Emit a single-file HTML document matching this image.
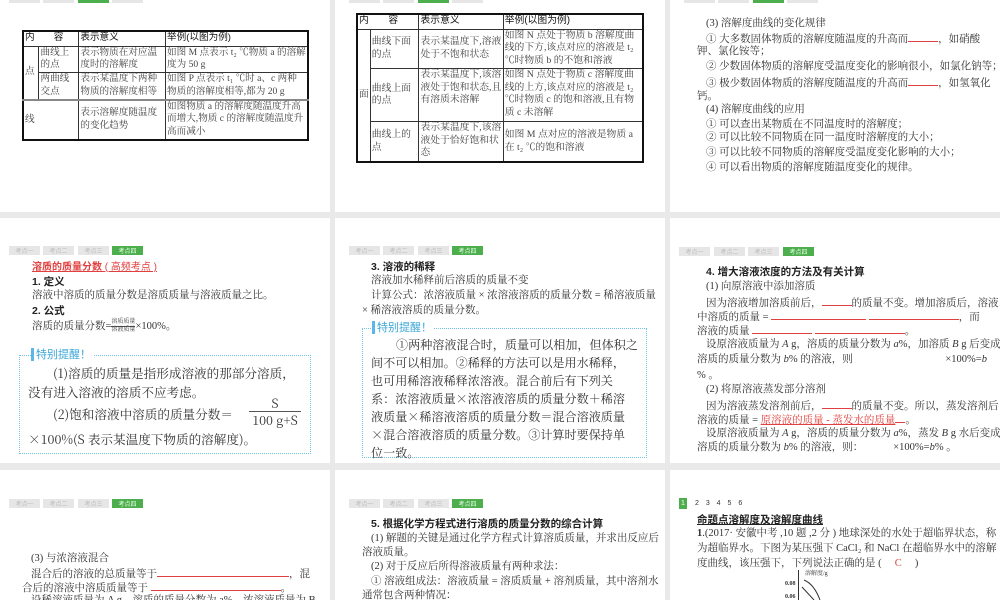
<!DOCTYPE html>
<html><head><meta charset="utf-8"><style>
*{margin:0;padding:0;box-sizing:border-box}
body{width:1000px;height:600px;background:#e9e9e9;position:relative;overflow:hidden;font-family:"Liberation Serif","Noto Serif CJK SC","Noto Sans CJK SC",serif;color:#333}
.p{position:absolute;background:#fff;overflow:hidden}
.a{position:absolute;white-space:nowrap}
.t{font-size:10.5px;line-height:14px}
.b{font-weight:bold;font-family:"Liberation Sans","Noto Sans CJK SC",sans-serif;color:#222}
.tab{position:absolute;width:31px;height:9px;background:#e6e6e6;color:#bbb;font-size:6px;line-height:9px;text-align:center;font-family:"Noto Sans CJK SC",sans-serif}
.tab.g{background:#4cae4c;color:#e8ffe8}
table{position:absolute;border-collapse:collapse;border:2px solid #111;font-size:9.6px;line-height:12.5px;color:#444}
td{border:1px solid #333;vertical-align:top;padding:0 1px}
.hd td{font-family:"Liberation Sans","Noto Sans CJK SC",sans-serif;color:#111}
.red{color:#e0403f}
.ul{border-bottom:1px solid #e0403f;display:inline-block;height:11px;vertical-align:baseline}
.tip{position:absolute;border:1px dotted #6fc3e6}
.tipl{position:absolute;font-family:"Noto Sans CJK SC",sans-serif;font-size:11px;color:#3aa6d8;background:#fff;border-left:3px solid #59b8e6;padding:0 2px;line-height:13px}
.tt{font-size:12.6px;line-height:19px;color:#333;letter-spacing:0;font-family:"Noto Serif CJK SC",serif}
.t5 .tt{font-size:12.1px;line-height:18px}
</style></head><body>

<!-- Panel 1 -->
<div class="p" style="left:0;top:0;width:330px;height:212px">
<div class="tab" style="left:9px;top:-6px"></div><div class="tab" style="left:43px;top:-6px"></div><div class="tab g" style="left:78px;top:-6px"></div><div class="tab" style="left:112px;top:-6px"></div>
<table style="left:22px;top:30px;width:287px;height:111px">
<tr class="hd" style="height:15px"><td colspan="2">内　　容</td><td style="width:87px">表示意义</td><td style="width:143px">举例(以图为例)</td></tr>
<tr><td rowspan="2" style="width:16px;vertical-align:middle">点</td><td style="width:40px">曲线上的点</td><td>表示物质在对应温度时的溶解度</td><td>如图 M 点表示 t₂ ℃物质 a 的溶解度为 50 g</td></tr>
<tr><td>两曲线交点</td><td>表示某温度下两种物质的溶解度相等</td><td>如图 P 点表示 t₁ ℃时 a、c 两种物质的溶解度相等,都为 20 g</td></tr>
<tr style="border-top:2px solid #888"><td colspan="2" style="vertical-align:middle">线</td><td style="vertical-align:middle">表示溶解度随温度的变化趋势</td><td>如图物质 a 的溶解度随温度升高而增大,物质 c 的溶解度随温度升高而减小</td></tr>
</table>
</div>

<!-- Panel 2 -->
<div class="p" style="left:335px;top:0;width:330px;height:212px">
<div class="tab" style="left:14px;top:-6px"></div><div class="tab" style="left:48px;top:-6px"></div><div class="tab g" style="left:83px;top:-6px"></div><div class="tab" style="left:117px;top:-6px"></div>
<table style="left:21px;top:13px;width:288px;height:150px;font-size:9.8px">
<tr class="hd" style="height:15px"><td colspan="2">内　　容</td><td style="width:85px">表示意义</td><td style="width:141px">举例(以图为例)</td></tr>
<tr><td rowspan="3" style="width:12px;vertical-align:middle">面</td><td style="width:49px;vertical-align:middle">曲线下面的点</td><td style="vertical-align:middle">表示某温度下,溶液处于不饱和状态</td><td>如图 N 点处于物质 b 溶解度曲线的下方,该点对应的溶液是 t₂ ℃时物质 b 的不饱和溶液</td></tr>
<tr><td style="vertical-align:middle">曲线上面的点</td><td>表示某温度下,该溶液处于饱和状态,且有溶质未溶解</td><td>如图 N 点处于物质 c 溶解度曲线的上方,该点对应的溶液是 t₂ ℃时物质 c 的饱和溶液,且有物质 c 未溶解</td></tr>
<tr><td style="vertical-align:middle">曲线上的点</td><td>表示某温度下,该溶液处于恰好饱和状态</td><td style="vertical-align:middle">如图 M 点对应的溶液是物质 a 在 t₂ ℃的饱和溶液</td></tr>
</table>
</div>

<!-- Panel 3 -->
<div class="p t" style="left:670px;top:0;width:330px;height:212px">
<div class="tab" style="left:14px;top:-6px"></div><div class="tab" style="left:48px;top:-6px"></div><div class="tab g" style="left:83px;top:-6px"></div><div class="tab" style="left:117px;top:-6px"></div>
<div class="a" style="left:36px;top:17px">(3) 溶解度曲线的变化规律</div>
<div class="a" style="left:36px;top:31px">① 大多数固体物质的溶解度随温度的升高而<span class="ul" style="width:30px"></span>，如硝酸</div>
<div class="a" style="left:27px;top:45px">钾、氯化铵等；</div>
<div class="a" style="left:36px;top:60px">② 少数固体物质的溶解度受温度变化的影响很小，如氯化钠等；</div>
<div class="a" style="left:36px;top:75px">③ 极少数固体物质的溶解度随温度的升高而<span class="ul" style="width:30px"></span>，如氢氧化</div>
<div class="a" style="left:27px;top:90px">钙。</div>
<div class="a" style="left:36px;top:103px">(4) 溶解度曲线的应用</div>
<div class="a" style="left:36px;top:118px">① 可以查出某物质在不同温度时的溶解度；</div>
<div class="a" style="left:36px;top:131px">② 可以比较不同物质在同一温度时溶解度的大小；</div>
<div class="a" style="left:36px;top:146px">③ 可以比较不同物质的溶解度受温度变化影响的大小；</div>
<div class="a" style="left:36px;top:161px">④ 可以看出物质的溶解度随温度变化的规律。</div>
</div>

<!-- Panel 4 -->
<div class="p t" style="left:0;top:218px;width:330px;height:245px">
<div class="tab" style="left:9px;top:28px">考点一</div><div class="tab" style="left:43px;top:28px">考点二</div><div class="tab" style="left:78px;top:28px">考点三</div><div class="tab g" style="left:112px;top:28px">考点四</div>
<div class="a b red" style="left:32px;top:43px;font-size:10px;text-decoration:underline">溶质的质量分数<span style="font-weight:normal"> ( 高频考点 ) </span></div>
<div class="a b" style="left:32px;top:57px">1. 定义</div>
<div class="a" style="left:32px;top:71px">溶液中溶质的质量分数是溶质质量与溶液质量之比。</div>
<div class="a b" style="left:32px;top:86px">2. 公式</div>
<div class="a" style="left:32px;top:101px">溶质的质量分数=<span style="display:inline-block;vertical-align:middle;font-size:6px;line-height:7px;text-align:center"><span style="border-bottom:1px solid #555;display:block">溶质质量</span>溶液质量</span>×100%。</div>
<div class="tip" style="left:19px;top:137px;width:292px;height:99px"></div>
<div class="tipl" style="left:31px;top:130px">特别提醒！</div>
<div class="a tt" style="left:53px;top:145px">(1)溶质的质量是指形成溶液的那部分溶质，</div>
<div class="a tt" style="left:28px;top:164px">没有进入溶液的溶质不应考虑。</div>
<div class="a tt" style="left:53px;top:186px">(2)饱和溶液中溶质的质量分数＝</div>
<div class="a tt" style="left:249px;top:177px;width:52px;text-align:center;border-bottom:1px solid #555;line-height:16px">S</div>
<div class="a tt" style="left:249px;top:194px;width:52px;text-align:center;line-height:16px">100 g+S</div>
<div class="a tt" style="left:28px;top:211px">×100%(S 表示某温度下物质的溶解度)。</div>
</div>

<!-- Panel 5 -->
<div class="p t t5" style="left:335px;top:218px;width:330px;height:245px">
<div class="tab" style="left:14px;top:28px">考点一</div><div class="tab" style="left:48px;top:28px">考点二</div><div class="tab" style="left:83px;top:28px">考点三</div><div class="tab g" style="left:117px;top:28px">考点四</div>
<div class="a b" style="left:36px;top:42px">3. 溶液的稀释</div>
<div class="a" style="left:36px;top:56px">溶液加水稀释前后溶质的质量不变</div>
<div class="a" style="left:36px;top:71px">计算公式：浓溶液质量 × 浓溶液溶质的质量分数 = 稀溶液质量</div>
<div class="a" style="left:27px;top:86px">× 稀溶液溶质的质量分数。</div>
<div class="tip" style="left:27px;top:110px;width:285px;height:130px"></div>
<div class="tipl" style="left:37px;top:103px">特别提醒！</div>
<div class="a tt" style="left:61px;top:118px">①两种溶液混合时，质量可以相加，但体积之</div>
<div class="a tt" style="left:36px;top:136px">间不可以相加。②稀释的方法可以是用水稀释，</div>
<div class="a tt" style="left:36px;top:154px">也可用稀溶液稀释浓溶液。混合前后有下列关</div>
<div class="a tt" style="left:36px;top:172px">系：浓溶液质量×浓溶液溶质的质量分数＋稀溶</div>
<div class="a tt" style="left:36px;top:190px">液质量×稀溶液溶质的质量分数＝混合溶液质量</div>
<div class="a tt" style="left:36px;top:208px">×混合溶液溶质的质量分数。③计算时要保持单</div>
<div class="a tt" style="left:36px;top:226px">位一致。</div>
</div>

<!-- Panel 6 -->
<div class="p t" style="left:670px;top:218px;width:330px;height:245px">
<div class="tab" style="left:9px;top:29px">考点一</div><div class="tab" style="left:44px;top:29px">考点二</div><div class="tab" style="left:78px;top:29px">考点三</div><div class="tab g" style="left:113px;top:29px">考点四</div>
<div class="a b" style="left:36px;top:47px">4. 增大溶液浓度的方法及有关计算</div>
<div class="a" style="left:36px;top:62px">(1) 向原溶液中添加溶质</div>
<div class="a" style="left:36px;top:77px">因为溶液增加溶质前后，<span class="ul" style="width:30px"></span>的质量不变。增加溶质后，溶液</div>
<div class="a" style="left:27px;top:91px">中溶质的质量 = <span class="ul" style="width:95px"></span> <span class="ul" style="width:90px"></span>，而</div>
<div class="a" style="left:27px;top:105px">溶液的质量 <span class="ul" style="width:60px"></span> <span class="ul" style="width:90px"></span>。</div>
<div class="a" style="left:36px;top:120px">设原溶液质量为 <i>A</i> g，溶质的质量分数为 <i>a</i>%，加溶质 <i>B</i> g 后变成</div>
<div class="a" style="left:27px;top:135px">溶质的质量分数为 <i>b</i>% 的溶液，则 <span style="display:inline-block;width:90px"></span>×100%=<i>b</i></div>
<div class="a" style="left:27px;top:151px">% 。</div>
<div class="a" style="left:36px;top:165px">(2) 将原溶液蒸发部分溶剂</div>
<div class="a" style="left:36px;top:180px">因为溶液蒸发溶剂前后，<span class="ul" style="width:30px"></span>的质量不变。所以，蒸发溶剂后</div>
<div class="a" style="left:27px;top:194px">溶液的质量 = <span class="red" style="text-decoration:underline">原溶液的质量 - 蒸发水的质量</span><span class="ul" style="width:10px"></span>。</div>
<div class="a" style="left:36px;top:209px">设原溶液质量为 <i>A</i> g，溶质的质量分数为 <i>a</i>%，蒸发 <i>B</i> g 水后变成</div>
<div class="a" style="left:27px;top:223px">溶质的质量分数为 <i>b</i>% 的溶液，则：<span style="display:inline-block;width:30px"></span>×100%=<i>b</i>% 。</div>
</div>

<!-- Panel 7 -->
<div class="p t" style="left:0;top:470px;width:330px;height:130px">
<div class="tab" style="left:9px;top:29px">考点一</div><div class="tab" style="left:43px;top:29px">考点二</div><div class="tab" style="left:78px;top:29px">考点三</div><div class="tab g" style="left:112px;top:29px">考点四</div>
<div class="a" style="left:31px;top:82px">(3) 与浓溶液混合</div>
<div class="a" style="left:31px;top:96px">混合后的溶液的总质量等于<span class="ul" style="width:132px"></span>，混</div>
<div class="a" style="left:22px;top:110px">合后的溶液中溶质质量等于 <span class="ul" style="width:130px"></span>。</div>
<div class="a" style="left:31px;top:124px">设稀溶液质量为 A g，溶质的质量分数为 a%，浓溶液质量为 B</div>
</div>

<!-- Panel 8 -->
<div class="p t" style="left:335px;top:470px;width:330px;height:130px">
<div class="tab" style="left:14px;top:29px">考点一</div><div class="tab" style="left:48px;top:29px">考点二</div><div class="tab" style="left:83px;top:29px">考点三</div><div class="tab g" style="left:117px;top:29px">考点四</div>
<div class="a b" style="left:36px;top:47px">5. 根据化学方程式进行溶质的质量分数的综合计算</div>
<div class="a" style="left:36px;top:62px">(1) 解题的关键是通过化学方程式计算溶质质量，并求出反应后</div>
<div class="a" style="left:27px;top:76px">溶液质量。</div>
<div class="a" style="left:36px;top:90px">(2) 对于反应后所得溶液质量有两种求法：</div>
<div class="a" style="left:36px;top:105px">① 溶液组成法：溶液质量 = 溶质质量 + 溶剂质量，其中溶剂水</div>
<div class="a" style="left:27px;top:119px">通常包含两种情况：</div>
</div>

<!-- Panel 9 -->
<div class="p t" style="left:670px;top:470px;width:330px;height:130px">
<div class="a" style="left:9px;top:28px;width:8px;height:11px;background:#4cae4c;color:#fff;font-size:7px;line-height:11px;text-align:center;font-family:'Liberation Sans',sans-serif">1</div>
<div class="a" style="left:25px;top:28px;font-size:7px;line-height:11px;font-family:'Liberation Sans',sans-serif;word-spacing:5px">2 3 4 5 6</div>
<div class="a b" style="left:27px;top:43px;text-decoration:underline">命题点溶解度及溶解度曲线</div>
<div class="a" style="left:27px;top:57px"><b>1</b>.(2017· 安徽中考 ,10 题 ,2 分 ) 地球深处的水处于超临界状态，称</div>
<div class="a" style="left:27px;top:72px">为超临界水。下图为某压强下 CaCl₂ 和 NaCl 在超临界水中的溶解</div>
<div class="a" style="left:27px;top:87px">度曲线，该压强下，下列说法正确的是 (　 <span class="red">C</span>　 )</div>
<div class="a" style="left:135px;top:101px;font-size:6px;line-height:7px">溶解度/g</div>
<div class="a" style="left:128px;top:100px;width:1px;height:30px;background:#333"></div>
<div class="a" style="left:115px;top:111px;font-size:6px;line-height:7px;font-weight:bold">0.08</div>
<div class="a" style="left:115px;top:124px;font-size:6px;line-height:7px;font-weight:bold">0.06</div>
<svg class="a" style="left:128px;top:100px" width="30" height="30"><path d="M6 10 Q16 14 22 30" stroke="#333" fill="none"/><path d="M4 17 L16 30" stroke="#333" fill="none"/></svg>
</div>
</body></html>
